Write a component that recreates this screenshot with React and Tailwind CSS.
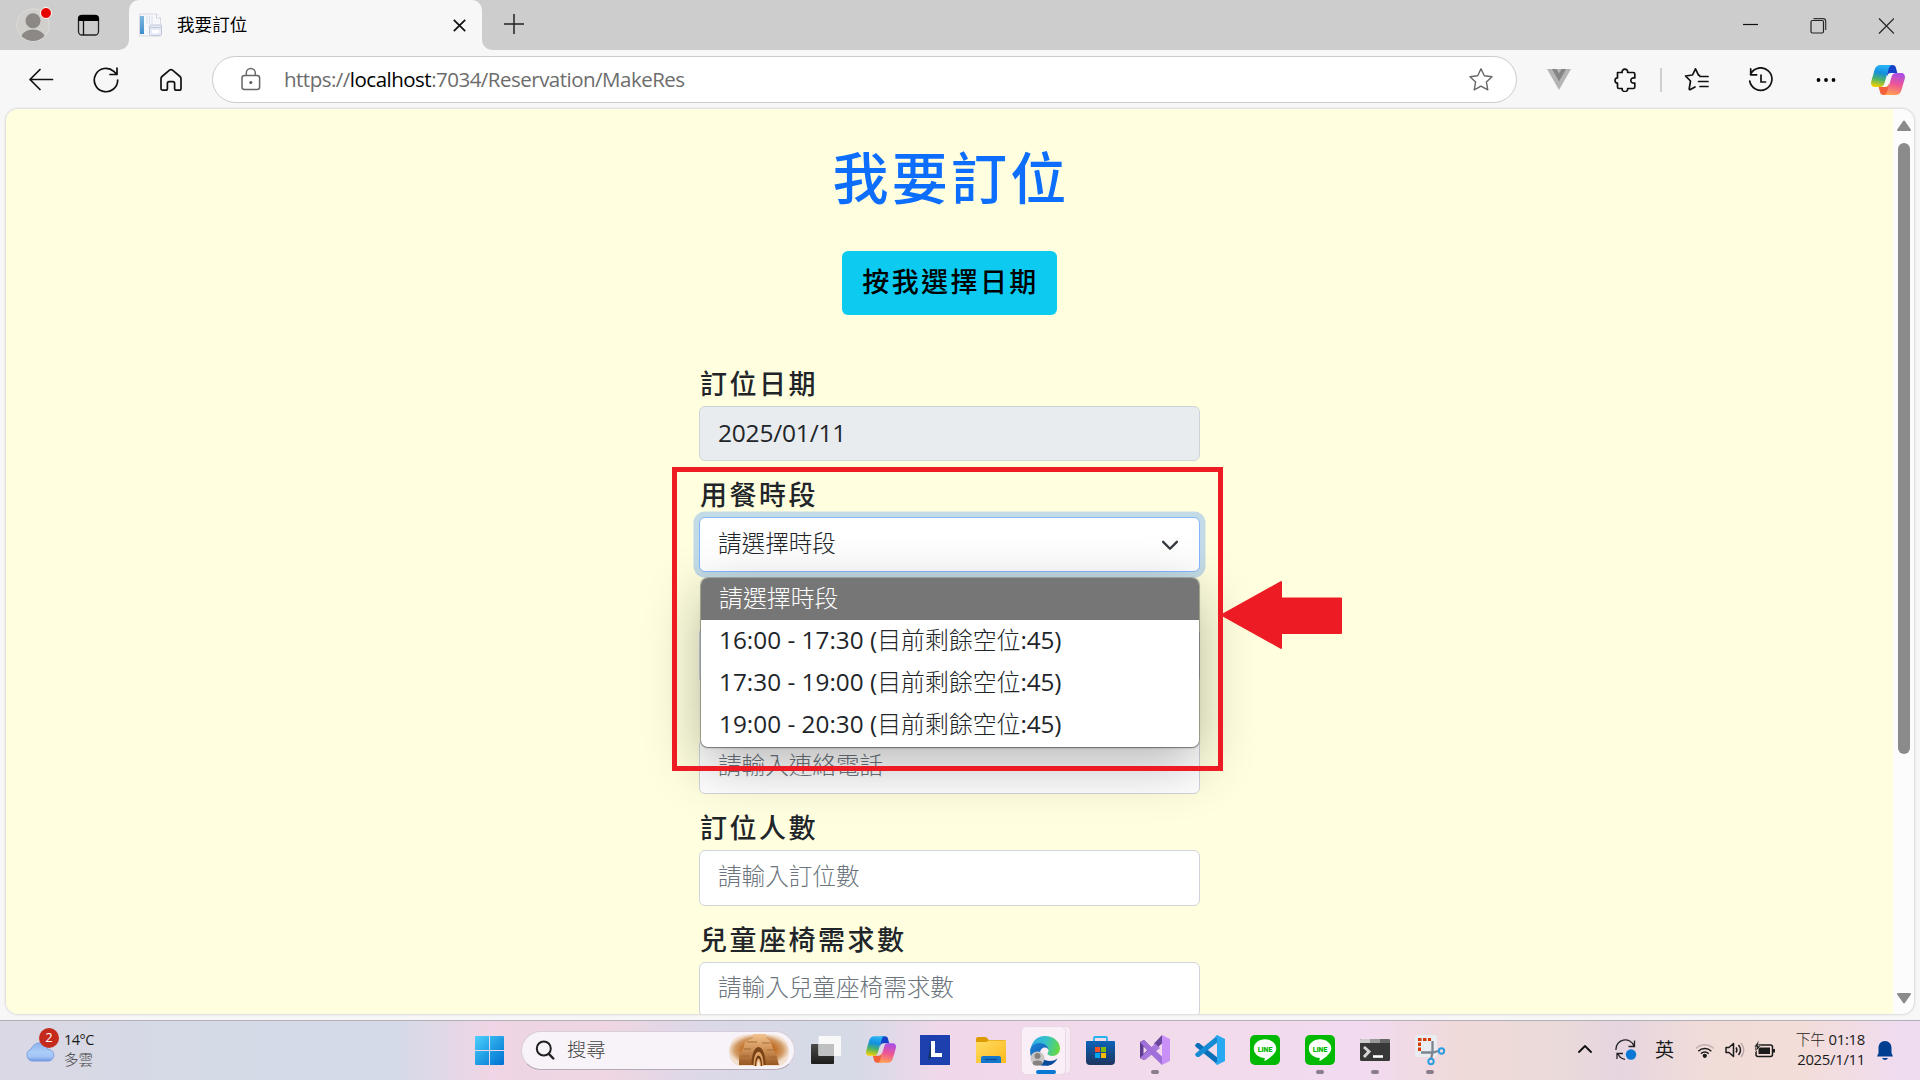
import React from "react";

const uiFont = "font-['Open_Sans','Noto_Sans_CJK_TC',sans-serif]";

function CopilotIcon({ id, className }) {
  return (
    <svg className={className} viewBox="0 0 34 30">
      <defs>
        <linearGradient id={id + "a"} x1="0.5" y1="0" x2="0.3" y2="1">
          <stop offset="0" stopColor="#28b4f5" />
          <stop offset="0.35" stopColor="#1490df" />
          <stop offset="0.65" stopColor="#4cb368" />
          <stop offset="1" stopColor="#f5d000" />
        </linearGradient>
        <linearGradient id={id + "b"} x1="0.6" y1="0" x2="0.4" y2="1">
          <stop offset="0" stopColor="#a94ee8" />
          <stop offset="0.5" stopColor="#ee5596" />
          <stop offset="1" stopColor="#ffa052" />
        </linearGradient>
      </defs>
      <path d="M17 0h4.500c2 0 3 1.200 3.500 3l1.300 5H20c-2.500 0-3.500 1.500-4.200 4z" fill="#1441c8" />
      <path d="M17 30h-4.500c-2 0-3-1.200-3.500-3l-1.300-5H14c2.500 0 3.500-1.500 4.200-4z" fill="#f4603c" />
      <path d="M9.500 0h12c-2.500.3-3.300 2-4 4.500L13.500 18c-.8 2.700-2 4-4.500 4H3.500C.7 22-.4 19.500.2 16.500L3.700 4.500C4.700 1.500 6.500 0 9.500 0z" fill={"url(#" + id + "a)"} />
      <path d="M24.500 30h-12c2.500-.3 3.300-2 4-4.500L20.500 12c.8-2.700 2-4 4.500-4h5.500c2.800 0 3.900 2.500 3.300 5.500l-3.500 12c-1 3-2.800 4.500-5.800 4.500z" fill={"url(#" + id + "b)"} />
    </svg>
  );
}

const line = { fill: "none", stroke: "#111", strokeWidth: 1.7, strokeLinecap: "round", strokeLinejoin: "round" };

function TabStrip() {
  return (
    <div className="flex h-[50px] shrink-0 bg-[#cdcdcd]">
      <div className="relative ml-4 mt-2 h-[34px] w-[34px]">
        <svg className="h-[34px] w-[34px]" viewBox="0 0 34 34">
          <clipPath id="avatar"><circle cx="17" cy="17" r="16" /></clipPath>
          <circle cx="17" cy="17" r="16.300" fill="#d0cfcc" stroke="#dddcd9" strokeWidth="1" />
          <g clipPath="url(#avatar)" fill="#8b8886">
            <circle cx="17" cy="12.700" r="7.500" />
            <ellipse cx="17" cy="32" rx="12.500" ry="10.500" />
          </g>
        </svg>
        <div className="absolute -top-px left-6 h-3 w-3 rounded-full border border-white bg-[#e60000]" />
      </div>
      <svg className="ml-[27px] mt-[14px] h-[22px] w-[23px]" viewBox="0 0 23 22">
        <rect x="1.500" y="1.500" width="20" height="19.500" rx="3.500" fill="none" stroke="#222" strokeWidth="1.300" />
        <path d="M1 7V4.500C1 2 2.500 1 5 1h13c2.500 0 4 1 4 3.500V7z" />
        <path d="M6.500 7v14" stroke="#111" strokeWidth="1.300" />
      </svg>
      <div className="relative ml-[29px] flex h-[50px] w-[353px] rounded-t-[10px] bg-[#f7f7f7]">
        <svg className="absolute -left-[10px] bottom-0 h-[10px] w-[10px]" viewBox="0 0 10 10"><path d="M10 0v10H0A10 10 0 0 0 10 0z" fill="#f7f7f7" /></svg>
        <svg className="absolute -right-[10px] bottom-0 h-[10px] w-[10px]" viewBox="0 0 10 10"><path d="M0 0v10h10A10 10 0 0 1 0 0z" fill="#f7f7f7" /></svg>
        <svg className="ml-[9px] mt-[13px] h-6 w-6" viewBox="0 0 24 24">
          <defs><linearGradient id="fav" x2="0" y2="1"><stop stopColor="#7db8e0" /><stop offset="1" stopColor="#3e8ecb" /></linearGradient></defs>
          <path d="M1.500 1h17l4 4v18h-21z" fill="#f6f7fa" stroke="#d6dae2" />
          <path d="M18.500 1v4h4" fill="#fff" stroke="#ccd2dc" />
          <rect x="2" y="3" width="4" height="18" fill="url(#fav)" />
          <path d="M9 3v8M11.500 3v8M14 3v8" stroke="#d9dfec" />
          <rect x="11.500" y="12" width="12" height="10.500" rx="1" fill="#e7ebf5" stroke="#c1c7d6" />
          <path d="M12 14.500h11" stroke="#c1c7d6" />
          <rect x="14" y="17" width="7" height="3" fill="#fff" />
        </svg>
        <span className="ml-[15px] mt-[10px] text-[17.500px] leading-[28px] tracking-[0.100px] text-black">我要訂位</span>
        <svg className="ml-auto mr-4 mt-[19px] h-[13px] w-[13px]" viewBox="0 0 13 13"><path d="M.8.8l11.400 11.400M12.200.8L.8 12.200" stroke="#111" strokeWidth="1.700" /></svg>
      </div>
      <svg className="ml-[22px] mt-[14px] h-5 w-5" viewBox="0 0 20 20"><path d="M10 0v20M0 10h20" stroke="#222" strokeWidth="1.500" /></svg>
      <svg className="ml-auto mt-[18px] h-4 w-[151px]" viewBox="0 0 151 16">
        <path d="M0 6.500h15" stroke="#111" strokeWidth="1.200" />
        <rect x="68" y="2.500" width="12.500" height="12.500" rx="1.500" fill="none" stroke="#222" strokeWidth="1.200" />
        <path d="M70.500.7h9.500c1.800 0 2.700 1 2.700 2.700V12" fill="none" stroke="#333" strokeWidth="1.200" />
        <path d="M136 .5l15 15M151 .5l-15 15" stroke="#222" strokeWidth="1.200" />
      </svg>
      <div className="w-[26px]" />
    </div>
  );
}

function Toolbar() {
  return (
    <div className="flex h-[58px] shrink-0 items-center bg-[#f7f7f7] pt-px">
      <svg className="ml-7 h-6 w-[26px]" viewBox="0 0 26 24"><path d="M24.500 11.500H2M12 1.500L2 11.500l10 10" {...line} /></svg>
      <svg className="ml-[39px] h-[26px] w-[26px]" viewBox="0 0 26 26"><path d="M24.700 13A11.700 11.700 0 1 1 20.800 4.300L24 7.300M24 1v6.500h-7" {...line} /></svg>
      <svg className="ml-[40px] h-6 w-6" viewBox="0 0 24 24"><path d="M2 10.500c0-.8.300-1.400 1-2l7.500-6.300c1-.8 2-.8 3 0L21 8.500c.7.600 1 1.200 1 2v10c0 1-.7 1.700-1.700 1.700h-3c-1 0-1.700-.7-1.700-1.700v-5c0-1-.7-1.800-1.700-1.800h-3.800c-1 0-1.700.8-1.700 1.800v5c0 1-.7 1.700-1.700 1.700h-3c-1 0-1.700-.7-1.700-1.700z" {...line} /></svg>
      <div className="ml-[29px] flex h-[47px] w-[1305px] items-center rounded-full border border-[#cbcbcb] bg-white">
        <svg className="-mt-px ml-7 h-6 w-5" viewBox="0 0 20 24">
          <rect x="1" y="8.500" width="17.600" height="14" rx="2.500" fill="none" stroke="#666" strokeWidth="1.500" />
          <path d="M5.300 8.500V6a4.500 4.500 0 0 1 9 0v2.500" fill="none" stroke="#666" strokeWidth="1.500" />
          <circle cx="9.800" cy="15.500" r="1.500" fill="#555" />
        </svg>
        <span className="-mt-0.5 ml-[23px] text-[20.500px] leading-7 tracking-[-0.510px] text-[#6c6c6c]">https://<span className="text-black">localhost</span>:7034/Reservation/MakeRes</span>
        <svg className="ml-auto mr-[22px] h-[26px] w-[26px]" viewBox="0 0 26 26"><path d="M13 1.800l3.300 7 7.700 1-5.600 5.300 1.400 7.700L13 19.100l-6.800 3.700 1.400-7.700L2 9.800l7.700-1z" fill="none" stroke="#666" strokeWidth="1.400" strokeLinejoin="round" /></svg>
      </div>
      <svg className="ml-[30px] h-[21px] w-6" viewBox="0 0 24 21"><path d="M0 0h24L12 21z" fill="#b5b5b5" /><path d="M5 0h4.500L12 4.500 14.500 0H19l-7 12.500z" fill="#858585" /></svg>
      <svg className="ml-[43px] h-6 w-[23px]" viewBox="0 0 23 24"><path d="M3.500 4.500h4.700c-.4-2 1-3.300 2.700-3.300s3.100 1.300 2.700 3.300h5.700c1 0 1.500.5 1.500 1.500v4c-2.500-.5-4 .8-4 2.500s1.500 3 4 2.500v4c0 1-.5 1.500-1.500 1.500h-5.700c.4 2-1 3-2.700 3s-3.100-1-2.700-3H5c-1 0-1.500-.5-1.500-1.500v-4C1.700 15 1 14 1 12.500S2 9.700 3.500 10z" {...line} /></svg>
      <div className="ml-[23px] h-6 w-0.5 bg-[#cfcfcf]" />
      <svg className="ml-[22px] h-[25px] w-[25px]" viewBox="0 0 25 25"><path d="M15.500 8.300l-1-.2L11.500 1.800 8.500 8l-7 1 5 5-1.300 7.800c0 .8.500 1.200 1.200.8L11 20M16 9.500h8M14.500 14.500H24M16 19.500h8" {...line} /></svg>
      <svg className="ml-[39px] h-[26px] w-[26px]" viewBox="0 0 26 26"><path d="M2.500 7.500A11.200 11.200 0 1 1 1.700 14M2.700 1.800v6h6M13 8v7h4.500" {...line} /></svg>
      <svg className="ml-[42px] h-1.5 w-5" viewBox="0 0 20 6"><circle cx="2.500" cy="3" r="1.900" /><circle cx="10" cy="3" r="1.900" /><circle cx="17.500" cy="3" r="1.900" /></svg>
      <CopilotIcon id="cpTop" className="ml-[35px] h-[30px] w-[34px]" />
    </div>
  );
}

function Field({ label, children }) {
  return (
    <div className="mb-[15.900px] flex flex-col gap-1">
      <label className="h-9 pl-px text-[27px] leading-9 font-medium tracking-[2.500px] text-[#212529]">{label}</label>
      {children}
    </div>
  );
}

function Input({ placeholder }) {
  return <div className="flex h-[55.300px] items-center rounded-[6px] border border-[#ced4da] bg-white pl-[18px] pb-0.5 text-[23.600px] font-light text-[#6c757d]">{placeholder}</div>;
}

const slots = ["16:00 - 17:30", "17:30 - 19:00", "19:00 - 20:30"];

function SlotMenu() {
  return (
    <div className="absolute left-px top-[60px] z-10 w-[498px] rounded-[7px] bg-white pb-px text-[23.900px] text-[#212529] shadow-[0_0_0_1px_rgba(0,0,0,0.25),0_1px_2px_rgba(0,0,0,0.3),0_16px_56px_rgba(0,0,0,0.3)]">
      <div className="flex h-[42px] items-center rounded-t-[7px] bg-[#767676] pb-px pl-[18px] font-light text-white">請選擇時段</div>
      {slots.map((s) => (
        <div key={s} className="flex h-[42px] items-center whitespace-pre pl-[18px] pb-px">
          <span className="text-[24.300px] font-normal tracking-[0.020px]">{s} (</span><span className="font-light">目前剩餘空位</span><span className="text-[24.300px] font-normal tracking-[-0.150px]">:45)</span>
        </div>
      ))}
    </div>
  );
}

function Page() {
  return (
    <div className="relative ml-1.5 flex h-[905px] w-[1908px] shrink-0 overflow-hidden rounded-xl bg-[#fcfcfc] shadow-[0_0_2px_1px_rgba(0,0,0,0.12)]">
      <div className="flex w-[1887px] flex-col items-center bg-[#ffffdf]">
        <h1 className="mt-[34px] mb-px pl-[3px] text-[56px] leading-[68px] font-medium tracking-[3.200px] text-[#0d6efd]">我要訂位</h1>
        <button className="mt-[39px] h-16 w-[215px] shrink-0 rounded-[6px] bg-[#0dcaf0] pb-0.5 pl-0.5 text-[27px] font-medium tracking-[2.400px] text-black">按我選擇日期</button>
        <div className="mt-[50.600px] w-[501px]">
          <Field label="訂位日期">
            <div className="flex h-[55.300px] items-center rounded-[6px] border border-[#ced4da] bg-[#e9ecef] pl-[18px] text-[24.500px] tracking-[-0.200px] text-[#212529]">2025/01/11</div>
          </Field>
          <Field label="用餐時段">
            <div className="relative flex h-[55.300px] items-center justify-between rounded-[6px] border border-[#86b7fe] bg-white pl-[18px] pr-[19px] pb-0.5 text-[23.600px] font-light text-[#212529] shadow-[0_0_0_5.500px_#c3dbe6]">
              請選擇時段
              <svg className="mt-[3px] h-5 w-5" viewBox="0 0 16 16"><path d="m2.500 5.500 5.500 5.500 5.500-5.500" fill="none" stroke="#343a40" strokeWidth="1.900" strokeLinecap="round" strokeLinejoin="round" /></svg>
              <SlotMenu />
            </div>
          </Field>
          <Field><Input /></Field>
          <Field><Input placeholder="請輸入連絡電話" /></Field>
          <Field label="訂位人數"><Input placeholder="請輸入訂位數" /></Field>
          <Field label="兒童座椅需求數"><Input placeholder="請輸入兒童座椅需求數" /></Field>
        </div>
      </div>
      <div className="flex w-[21px] flex-col items-center pl-px">
        <svg className="mt-[11px] h-[11px] w-[14px]" viewBox="0 0 14 11"><path d="M7 1.500L13 10H1z" fill="#8b8b8b" stroke="#8b8b8b" strokeWidth="2" strokeLinejoin="round" /></svg>
        <div className="mt-3 h-[611px] w-3 rounded-full bg-[#8b8b8b]" />
        <svg className="mb-[10px] mt-auto h-[11px] w-[14px]" viewBox="0 0 14 11"><path d="M7 9.500L13 1H1z" fill="#8b8b8b" stroke="#8b8b8b" strokeWidth="2" strokeLinejoin="round" /></svg>
      </div>
      <div className="absolute left-[666px] top-[358px] z-20 h-[304px] w-[551px] border-[5px] border-[#ed1c24]" />
      <svg className="absolute left-[1214px] top-[471px] z-20 h-[70px] w-[123px]" viewBox="0 0 123 70"><path d="M0 35L61 1q1 0 1 1v15.500h59q1 0 1 1V53q0 1-1 1H62v14q0 1-1 1z" fill="#ed1c24" /></svg>
    </div>
  );
}

function Slot({ children, dot }) {
  return (
    <div className="relative flex h-full w-[55px] shrink-0 items-center justify-center">
      {children}
      {dot && <div className="absolute bottom-[6px] left-[23px] h-1 w-2 rounded-full bg-[#8a7d8b]" />}
    </div>
  );
}

function EdgeIcon() {
  return (
    <svg className="h-[30px] w-[30px]" viewBox="0 0 30 30">
      <defs>
        <linearGradient id="ed1" x1="0" y1="0.300" x2="1" y2="0.500"><stop stopColor="#2fa8e8" /><stop offset="0.500" stopColor="#35c1c9" /><stop offset="1" stopColor="#66d93e" /></linearGradient>
        <linearGradient id="ed2" x1="0" y1="0" x2="0.600" y2="1"><stop stopColor="#1b86d8" /><stop offset="1" stopColor="#0d54a8" /></linearGradient>
      </defs>
      <path d="M.5 14.500C1 6 7 0 15 0c8.500 0 15 5.500 15 12.500 0 4.500-3.500 7.500-7.500 7.500-3 0-5-1-5-2.200 0-.8 1-1.300 1-3.300 0-3-3.500-6-8-6S1.500 11 .5 14.500z" fill="url(#ed1)" />
      <path d="M.1 15C.1 10 5 7 9.500 7c5 0 9 3.500 9 7 0-1-1.500-2.500-3.500-2.500-3 0-5 2.500-5 6 0 6 5 10.500 9 11.500C8 32 0 24.500.1 15z" fill="url(#ed2)" />
      <path d="M10.500 15.500c-1.500 6 3.500 9.500 9.500 9.500 3.500 0 6-1.500 7.500-2.500-2 4-6 7-10 7.300C11.500 29 8 21 10.500 15.500z" fill="#0c4a9b" />
      <circle cx="7.500" cy="22.500" r="7" fill="#c9c7c5" /><circle cx="7.500" cy="20" r="3" fill="#85817f" /><ellipse cx="7.500" cy="27" rx="4.800" ry="2.600" fill="#85817f" />
    </svg>
  );
}

function LineIcon() {
  return (
    <svg className="mb-px h-[30px] w-[30px]" viewBox="0 0 30 30">
      <rect width="30" height="30" rx="5" fill="#00b900" />
      <path d="M15 4.300c6.300 0 11.300 4.100 11.300 9.200 0 4.500-5.500 9-11 12.300-.8.400-1 0-.8-.8l.3-2c-6-.3-11-4-11-9.500 0-5.100 5-9.200 11.200-9.200z" fill="#fff" />
      <text x="15" y="16.600" textAnchor="middle" fontFamily="Roboto, sans-serif" fontWeight="900" fontSize="7" fill="#00b900">LINE</text>
    </svg>
  );
}

function Taskbar() {
  return (
    <div className="mt-[6px] flex h-[60px] shrink-0 items-center border-t border-[#b4afb7] bg-[linear-gradient(90deg,#dad8e4_0px,#d4dae6_200px,#d5dae8_400px,#efd5e5_490px,#efd6e2_610px,#dcd8e8_700px,#d4dae6_850px,#f0d8ea_940px,#f2dbea_1200px,#f2daf1_1360px,#efdad9_1460px,#eadad9_1560px,#e6d5e0_1620px,#f0dcd8_1700px,#f3ddd8_1800px,#f0dcf0_1900px)]">
      <div className="relative ml-[25px] -mt-px h-[26px] w-[33px]">
        <svg className="mt-[5px] h-[20px] w-[30px]" viewBox="0 0 31 21">
          <defs><linearGradient id="cl" x2="0" y2="1"><stop stopColor="#8fb2ee" /><stop offset="0.500" stopColor="#aaccf8" /><stop offset="0.750" stopColor="#a3c5f6" /><stop offset="1" stopColor="#6f98e0" /></linearGradient></defs>
          <path d="M7 20a6.500 6.500 0 0 1-.8-12.500C7.500 3.500 11 1 15 1c4.500 0 8 3 8.500 6.500 4 .2 6.500 3 6.500 6.200 0 3.500-2.500 6.300-6 6.300z" fill="url(#cl)" stroke="#7499df" strokeWidth="0.900" />
        </svg>
        <div className="absolute -top-[9px] left-[14px] flex h-5 w-5 items-center justify-center rounded-full bg-[#c42b1c] text-[13px] text-white">2</div>
      </div>
      <div className="-mt-0.5 ml-1.5 flex flex-col text-[14.500px] leading-5 text-[#1b1b1b]">
        <span className="tracking-[-0.500px]">14°C</span><span className="font-light text-[#444]">多雲</span>
      </div>
      <svg className="ml-auto h-[29px] w-[29px]" viewBox="0 0 29 29">
        <defs><linearGradient id="win" x2="1" y2="1"><stop stopColor="#4fd0fd" /><stop offset="0.500" stopColor="#219fe5" /><stop offset="1" stopColor="#0070d0" /></linearGradient></defs>
        <path d="M1 0h13v14H0V1q0-1 1-1zM15 0h13q1 0 1 1v13H15zM0 15h14v14H1q-1 0-1-1zM15 15h14v13q0 1-1 1H15z" fill="url(#win)" />
      </svg>
      <div className="ml-[17px] -mt-px flex h-[39px] w-[274px] shrink-0 items-center rounded-full border border-[#d8ced9] border-b-[#b3a9b7] bg-[#f8f3f8]">
        <svg className="ml-[13px] h-5 w-5" viewBox="0 0 20 20"><circle cx="8.800" cy="8.500" r="7" fill="none" stroke="#222" strokeWidth="2" /><path d="M13.800 13.800l4.500 4.700" stroke="#222" strokeWidth="2.400" strokeLinecap="round" /></svg>
        <span className="ml-[12px] text-[19.300px] font-light text-[#444]">搜尋</span>
        <svg className="ml-auto mr-[5px] h-8 w-[60px]" viewBox="0 0 60 32">
          <defs>
            <radialGradient id="rk"><stop offset="0.500" stopColor="#bf6a1d" /><stop offset="0.800" stopColor="#d29b66" /><stop offset="1" stopColor="#f2dfce" /></radialGradient>
            <linearGradient id="rock" x2="0" y2="1"><stop stopColor="#f3c28e" /><stop offset="0.500" stopColor="#cf9257" /><stop offset="1" stopColor="#995821" /></linearGradient>
          </defs>
          <path d="M14 1Q30-1 46 1q14 3 14 17 0 10-9 14H9Q0 28 0 18 0 4 14 1z" fill="url(#rk)" />
          <path d="M24 0h13v4l4 3 3 7 3 6 3 11H10V21l4-6 2-7 8-4z" fill="url(#rock)" />
          <path d="M18 8h10M33 9h8M15 15h7M38 16h7M13 22h7M40 23h8M12 27h7M41 28h8" stroke="#9c6332" strokeWidth="0.900" />
          <path d="M22.500 31c0-24 14-24 14 0" fill="#7a4318" />
          <path d="M24.500 32c0-19 10-19 10 0" fill="#dd9f62" />
          <path d="M26 32c0-14 7-14 7 0" fill="#6b3812" />
          <path d="M27.200 32c0-10 4.600-10 4.600 0" fill="#e9b57d" />
          <path d="M28.300 32c0-6 2.400-6 2.400 0z" fill="#fff1dc" />
        </svg>
      </div>
      <div className="ml-[3px] mr-px flex h-full shrink-0">
        <Slot>
          <svg className="mb-px ml-px h-7 w-[30px]" viewBox="0 0 30 28">
            <defs><linearGradient id="tv" x2="0" y2="1"><stop stopColor="#4a4a48" /><stop offset="1" stopColor="#1d1d1c" /></linearGradient></defs>
            <rect y="8" width="23" height="20" rx="1" fill="url(#tv)" /><rect x="7.500" width="22.500" height="20" rx="1" fill="#fafafa" fillOpacity="0.950" /><path d="M7.500 8H23v12H8.500q-1 0-1-1z" fill="#bfc0c2" />
          </svg>
        </Slot>
        <Slot><CopilotIcon id="cpTask" className="mb-0.5 ml-px h-[27px] w-[30px]" /></Slot>
        <Slot>
          <svg className="mb-px h-[30px] w-[30px]" viewBox="0 0 30 30"><rect width="30" height="30" fill="#1e3fae" /><path d="M8 25l3-19v17z" fill="#113366" /><path d="M11 6h4v12h7v4H11z" fill="#fff" /></svg>
        </Slot>
        <Slot>
          <svg className="mb-px ml-px h-[27px] w-[30px]" viewBox="0 0 30 27">
            <defs><linearGradient id="fo" x2="1" y2="1"><stop stopColor="#ffdc64" /><stop offset="1" stopColor="#fbb91b" /></linearGradient></defs>
            <path d="M0 2q0-2 2-2h8l3 3h15q2 0 2 2v6H0z" fill="#dc9a05" /><path d="M0 5h10l3-1.500h17V26H0z" fill="url(#fo)" />
            <path d="M5 26v-5q0-2 2-2h16q2 0 2 2v5z" fill="#1477cc" /><path d="M9 22.500h12" stroke="#0b4e96" strokeWidth="1.300" />
          </svg>
        </Slot>
        <Slot>
          <div className="absolute left-[5px] top-[5px] h-[48px] w-12 rounded-[5px] border border-[#ead8e6] bg-[#f9ebf5]" />
          <div className="absolute left-[3px] top-[5px] flex h-[49px] w-[45px] items-center justify-center rounded-[5px] border border-[#ead8e6] bg-[#faeff7] pl-1"><EdgeIcon /></div>
          <div className="absolute bottom-[6px] left-[18px] h-1 w-5 rounded-full bg-[#0a78d4]" />
        </Slot>
        <Slot>
          <svg className="mb-px h-[29px] w-[29px]" viewBox="0 0 29 29">
            <defs><linearGradient id="st" x2="0" y2="1"><stop stopColor="#0c63b8" /><stop offset="1" stopColor="#1f3460" /></linearGradient></defs>
            <path d="M8 6V2q0-1 1-1h11q1 0 1 1v4" fill="none" stroke="#27b4ee" strokeWidth="1.800" /><path d="M0 6q0-1 1-1h27q1 0 1 1v19q0 4-4 4H4q-4 0-4-4z" fill="url(#st)" />
            <path d="M9 11h5v5H9z" fill="#f35325" /><path d="M15 11h5v5h-5z" fill="#81bc06" /><path d="M9 17h5v5H9z" fill="#05a6f0" /><path d="M15 17h5v5h-5z" fill="#ffba08" />
          </svg>
        </Slot>
        <Slot dot>
          <svg className="mb-px h-[30px] w-[30px]" viewBox="0 0 30 30">
            <path d="M0 7l4-2 4 4v12l-4 4-4-2z" fill="#5c3b91" /><path d="M3.500 11.500l4 3.500-4 4z" fill="#f3d9ec" /><path d="M22 8.500L15 15l7 6.500z" fill="#f3d9ec" /><path d="M14 8.500L22 0v8.500l-5 4.500z" fill="#6b479f" /><path d="M0 23L5 18l4-3.500 6-6 5 4.500L5 25z" fill="#a878dd" /><path d="M0 7l4-2 18 16.500V30L8 16.500z" fill="#a070d8" /><path d="M22 0l8 4v22l-8 4z" fill="#c990f7" />
          </svg>
        </Slot>
        <Slot>
          <svg className="mb-px h-[30px] w-[30px]" viewBox="0 0 30 30"><path d="M0 10l2-2h2l19 15v7L1 12q-1-1-1-2z" fill="#0a6fb8" /><path d="M0 20l2 2h2L23 7V0L1 18q-1 1-1 2z" fill="#168bd4" /><path d="M22 0l8 4v22l-8 4-2-2 2-1V3l-2-1z" fill="#28a8f0" /></svg>
        </Slot>
        <Slot><LineIcon /></Slot>
        <Slot dot><LineIcon /></Slot>
        <Slot dot>
          <svg className="mb-px h-[22px] w-[30px]" viewBox="0 0 30 22"><rect width="30" height="22" rx="1.500" fill="#383838" /><path d="M1 0h9v4H0V1z" fill="#cccccc" /><path d="M10 0h10v4H10z" fill="#999" /><path d="M20 0h9l1 1v3H20z" fill="#666" /><path d="M4 8l5 4.500L4 18" fill="none" stroke="#d4d4d4" strokeWidth="3" /><path d="M13 17.500h10" stroke="#fff" strokeWidth="2.600" /></svg>
        </Slot>
        <Slot dot>
          <svg className="mb-px h-[30px] w-[30px] overflow-visible" viewBox="0 0 30 30"><rect width="22" height="22" rx="2" fill="#e9edf1" /><path d="M4.500 16V4.500H16" fill="none" stroke="#d83b01" strokeWidth="3" strokeDasharray="3.500 1.500" /><path d="M17.500 6v11.500L16 24M6 17.500h12l5-1.500" fill="none" stroke="#7b8590" strokeWidth="2.300" /><circle cx="26.500" cy="16" r="2.700" fill="none" stroke="#2a9de0" strokeWidth="1.900" /><circle cx="16" cy="26.500" r="2.700" fill="none" stroke="#2a9de0" strokeWidth="1.900" /></svg>
        </Slot>
      </div>
      <svg className="ml-[119px] -mt-1 h-[9px] w-[14px]" viewBox="0 0 14 9"><path d="M1 8l6-6 6 6" {...line} strokeWidth="1.800" /></svg>
      <svg className="ml-[23px] -mt-px h-[22px] w-[22px]" viewBox="0 0 22 22"><path d="M1 11A9.300 9.300 0 0 1 19 7M19.500 1.500v6h-6M2 20v-5.500h6M3 15c1.500 3 4 5 7 5.300" fill="none" stroke="#222" strokeWidth="1.300" /><circle cx="16" cy="15.500" r="5.200" fill="#0a78d4" /></svg>
      <span className="-mt-0.5 ml-[18px] text-[19px] leading-6 text-[#1b1b1b]">英</span>
      <svg className="-mt-0.5 ml-[21px] h-5 w-20" viewBox="0 0 80 20" fill="none" stroke="#1b1b1b" strokeWidth="1.500">
        <path d="M.8 8.500a12.500 12.500 0 0 1 17.900 0" stroke="#c3b2b0" /><path d="M3.300 11.200a9.200 9.200 0 0 1 13 0M5.900 13.700a5.500 5.500 0 0 1 7.800 0" /><circle cx="9.800" cy="15.800" r="1.400" fill="#1b1b1b" />
        <path d="M31 7.500h3l4.500-4v13l-4.500-4h-3z" strokeLinejoin="round" /><path d="M41 7.500q1.800 2.500 0 5M43.500 5q4 5 0 10" /><path d="M46 3q5.500 7 0 14" stroke="#bbaaa9" />
        <rect x="61" y="5" width="16.500" height="11.500" rx="2" /><rect x="63.500" y="7.500" width="11.500" height="6.500" fill="#1b1b1b" stroke="none" /><path d="M79 9v3.500" strokeWidth="2" /><path d="M64 0l-5 7h3l-2 5 6-6h-3z" fill="#1b1b1b" stroke="#f2dcd8" strokeWidth="0.600" />
      </svg>
      <div className="-mt-[3px] ml-[19px] mr-3 flex w-[71px] flex-col items-end whitespace-nowrap text-[14.900px] leading-5 tracking-[-0.300px] text-[#1b1b1b]">
        <span><span className="font-light">下午</span> 01:18</span><span>2025/1/11</span>
      </div>
      <svg className="-mt-px mr-[27px] h-[19px] w-4 shrink-0" viewBox="0 0 16 19"><path d="M8 0c4 0 6.500 3 6.500 7v5l1.500 3.500H0L1.500 12V7c0-4 2.500-7 6.500-7zM5 17h6q-1 2-3 2t-3-2z" fill="#003e92" /></svg>
    </div>
  );
}

export default function App() {
  return (
    <div className={"flex h-[1080px] w-[1920px] flex-col overflow-hidden bg-[#f7f7f7] " + uiFont}>
      <TabStrip />
      <Toolbar />
      <div className="h-px shrink-0" />
      <Page />
      <Taskbar />
    </div>
  );
}
